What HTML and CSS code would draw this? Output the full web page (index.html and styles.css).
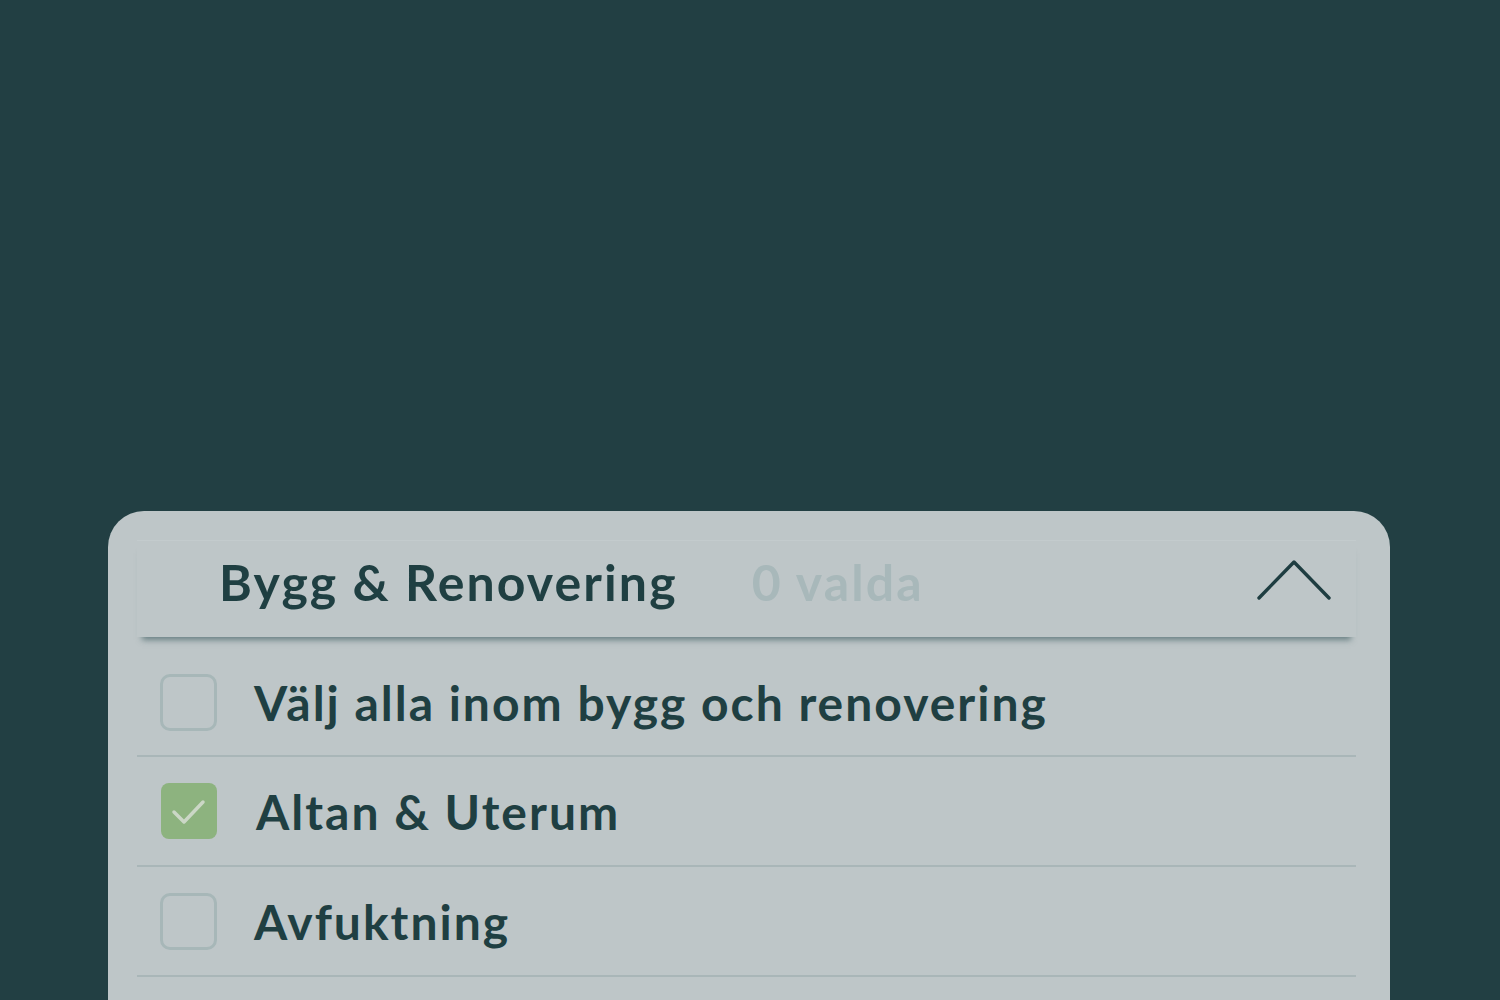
FILE: index.html
```html
<!DOCTYPE html>
<html lang="sv">
<head>
<meta charset="utf-8">
<title>Bygg &amp; Renovering</title>
<link rel="stylesheet" href="styles.css">
</head>
<body>
<div class="page">
  <section class="card">
    <header class="head">
      <h2 class="title">Bygg &amp; Renovering</h2>
      <span class="count">0 valda</span>
      <svg class="chev" width="76" height="42" viewBox="0 0 76 42"><path d="M3 39 L38 3 L73 39" fill="none" stroke="#1e3d41" stroke-width="3.4" stroke-linecap="round" stroke-linejoin="round"/></svg>
    </header>
    <ul class="list">
      <li class="row first"><span class="box"></span><span class="label">Välj alla inom bygg och renovering</span></li>
      <li class="row"><span class="box checked"><svg width="56" height="56" viewBox="0 0 56 56"><path d="M13 29 L23 39 L42 19" fill="none" stroke="#cbd7c6" stroke-width="3.5" stroke-linecap="round" stroke-linejoin="round"/></svg></span><span class="label">Altan &amp; Uterum</span></li>
      <li class="row"><span class="box"></span><span class="label">Avfuktning</span></li>
    </ul>
  </section>
</div>
</body>
</html>
```
FILE: styles.css
```css
html, body {
  margin: 0;
  padding: 0;
  background: #223f43;
  overflow: hidden;
  height: 1000px;
}
.page {
  padding: 511px 110px 0 108px;
  font-family: Lato, "Open Sans", sans-serif;
}
.card {
  background: #bec6c8;
  border-radius: 36px 36px 0 0;
  padding: 29px 34px 0 29px;
  height: 460px;
}
.head {
  display: flex;
  align-items: center;
  height: 97px;
  padding-left: 82px;
  padding-right: 24px;
  padding-bottom: 14px;
  box-sizing: border-box;
  border-top: 1px solid #c3cbcd;
  box-shadow: 0 8px 6px -5px rgba(60, 90, 95, 0.65);
  position: relative;
  z-index: 1;
}
.title {
  margin: 0;
  font-size: 50px;
  font-weight: 700;
  color: #1f3f42;
  letter-spacing: 2.1px;
}
.count {
  margin-left: 74px;
  font-size: 50px;
  font-weight: 700;
  color: #a8b8ba;
  letter-spacing: 2.1px;
  flex: 1;
}
.chev {
  display: block;
  margin-top: -4px;
}
.list {
  list-style: none;
  margin: 0;
  padding: 0;
}
.row {
  display: flex;
  align-items: center;
  height: 108px;
  border-bottom: 2px solid #a9b6b8;
  padding-left: 23px;
}
.row.first {
  height: 106px;
  padding-top: 12px;
}
.box {
  width: 51px;
  height: 51px;
  border: 3.5px solid #a7b7b8;
  border-radius: 10px;
  flex: none;
  margin-right: 37px;
}
.box.checked {
  border: none;
  width: 56px;
  height: 56px;
  margin: 0 39px 0 1px;
  background: #8db37f;
  border-radius: 8px;
}
.box svg { display: block; }
.label {
  font-size: 48px;
  font-weight: 700;
  color: #1f3f42;
  letter-spacing: 2px;
}
```
